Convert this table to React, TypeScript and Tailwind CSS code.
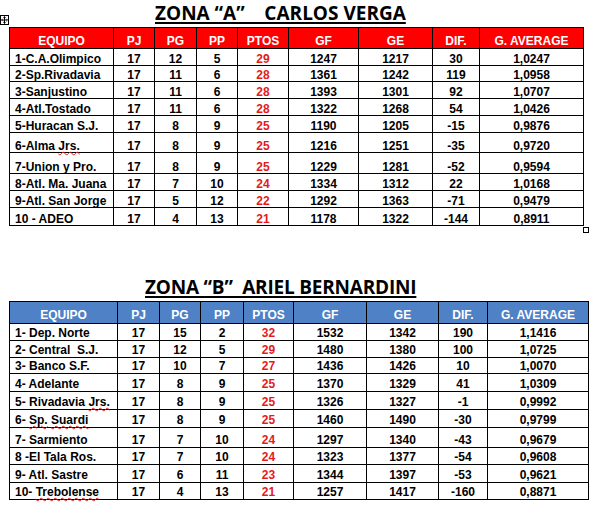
import React from "react";

type Row = { name: React.ReactNode; v: (string | number)[]; h: number };

const wavy = "underline decoration-wavy decoration-[#e02020] decoration-1 underline-offset-[1px]";

const rowsA: Row[] = [
  { name: "1-C.A.Olimpico", v: [17, 12, 5, 29, 1247, 1217, 30, "1,0247"], h: 17 },
  { name: "2-Sp.Rivadavia", v: [17, 11, 6, 28, 1361, 1242, 119, "1,0958"], h: 16 },
  { name: "3-Sanjustino", v: [17, 11, 6, 28, 1393, 1301, 92, "1,0707"], h: 17 },
  { name: "4-Atl.Tostado", v: [17, 11, 6, 28, 1322, 1268, 54, "1,0426"], h: 17 },
  { name: "5-Huracan S.J.", v: [17, 8, 9, 25, 1190, 1205, -15, "0,9876"], h: 17 },
  { name: <>6-Alma <span className={wavy}>Jrs.</span></>, v: [17, 8, 9, 25, 1216, 1251, -35, "0,9720"], h: 20 },
  { name: "7-Union y Pro.", v: [17, 8, 9, 25, 1229, 1281, -52, "0,9594"], h: 21 },
  { name: "8-Atl. Ma. Juana", v: [17, 7, 10, 24, 1334, 1312, 22, "1,0168"], h: 17 },
  { name: "9-Atl. San Jorge", v: [17, 5, 12, 22, 1292, 1363, -71, "0,9479"], h: 17 },
  { name: "10 - ADEO", v: [17, 4, 13, 21, 1178, 1322, -144, "0,8911"], h: 18 },
];

const rowsB: Row[] = [
  { name: "1- Dep. Norte", v: [17, 15, 2, 32, 1532, 1342, 190, "1,1416"], h: 17 },
  { name: "2- Central  S.J.", v: [17, 12, 5, 29, 1480, 1380, 100, "1,0725"], h: 17 },
  { name: "3- Banco S.F.", v: [17, 10, 7, 27, 1436, 1426, 10, "1,0070"], h: 16 },
  { name: "4- Adelante", v: [17, 8, 9, 25, 1370, 1329, 41, "1,0309"], h: 18 },
  { name: <>5- Rivadavia <span className={wavy}>Jrs.</span></>, v: [17, 8, 9, 25, 1326, 1327, -1, "0,9992"], h: 18 },
  { name: <>6- <span className={wavy}>Sp.</span> <span className={wavy}>Suardi</span></>, v: [17, 8, 9, 25, 1460, 1490, -30, "0,9799"], h: 18 },
  { name: "7- Sarmiento", v: [17, 7, 10, 24, 1297, 1340, -43, "0,9679"], h: 20 },
  { name: "8 -El Tala Ros.", v: [17, 7, 10, 24, 1323, 1377, -54, "0,9608"], h: 17 },
  { name: "9- Atl. Sastre", v: [17, 6, 11, 23, 1344, 1397, -53, "0,9621"], h: 18 },
  { name: <>10- <span className={wavy}>Trebolense</span></>, v: [17, 4, 13, 21, 1257, 1417, -160, "0,8871"], h: 17 },
];

const headers = ["EQUIPO", "PJ", "PG", "PP", "PTOS", "GF", "GE", "DIF.", "G. AVERAGE"];

function Table({
  rows,
  widths,
  headBg,
  headH,
  bodyPad,
  headPad,
}: {
  rows: Row[];
  widths: number[];
  headBg: string;
  headH: number;
  bodyPad: string;
  headPad: string;
}) {
  const total = widths.reduce((a, b) => a + b, 0);
  return (
    <table
      className="table-fixed border-collapse border border-black ml-[9px] font-['Liberation_Sans',Arial,sans-serif] font-bold text-[12px] leading-[12px]"
      style={{ width: total + 1 }}
    >
      <colgroup>
        {widths.map((w, i) => (
          <col key={i} style={{ width: w }} />
        ))}
      </colgroup>
      <thead>
        <tr style={{ height: headH }} className={headBg}>
          {headers.map((h) => (
            <th
              key={h}
              className={`border border-black text-white text-center align-bottom font-bold p-0 whitespace-nowrap ${headPad}`}
            >
              {h}
            </th>
          ))}
        </tr>
      </thead>
      <tbody>
        {rows.map((r, i) => (
          <tr key={i} style={{ height: r.h }}>
            <td className={`border border-black text-left align-bottom pl-[5px] pr-0 pt-0 whitespace-pre text-black ${bodyPad}`}>
              {r.name}
            </td>
            {r.v.map((v, j) => (
              <td
                key={j}
                className={`border border-black text-center align-bottom p-0 whitespace-nowrap ${bodyPad} ${
                  j === 3 ? "text-[#e31b1b]" : "text-black"
                }`}
              >
                {v}
              </td>
            ))}
          </tr>
        ))}
      </tbody>
    </table>
  );
}

export default function App() {
  return (
    <div className="relative w-[589px] h-[509px] bg-white overflow-hidden">
      {/* move handle */}
      <div className="absolute left-0 top-[15px] w-[9px] h-[10px] border border-black bg-white flex items-center justify-center">
        <svg width="7" height="8" viewBox="0 0 7 8" className="block">
          <path d="M3.5 0.5 V7.5 M0.5 4 H6.5" stroke="black" strokeWidth="1" fill="none" />
          <path d="M2.3 1.7 L3.5 0.5 L4.7 1.7 M2.3 6.3 L3.5 7.5 L4.7 6.3 M1.7 2.8 L0.5 4 L1.7 5.2 M5.3 2.8 L6.5 4 L5.3 5.2" stroke="black" strokeWidth="0.8" fill="none" />
        </svg>
      </div>
      {/* resize handle */}
      <div className="absolute left-[583px] top-[227px] w-[6px] h-[6px] border border-black bg-white" />

      <div className="h-[27px] pl-[155px] pt-[3px] font-['Open_Sans',sans-serif] font-bold text-[19px] leading-[21px] whitespace-pre text-black">
        <span className="underline decoration-2 underline-offset-[2px]">{"ZONA “A”    CARLOS VERGA"}</span>
      </div>
      <Table
        rows={rowsA}
        widths={[104, 41, 42, 41, 51, 70, 74, 47, 104]}
        headBg="bg-[#ff0000]"
        headH={21}
        bodyPad="pb-0"
        headPad="pb-[1px]"
      />
      <div className="h-[75px] flex items-end pl-[145px] pb-[3px] font-['Open_Sans',sans-serif] font-bold text-[19px] leading-[21px] whitespace-pre text-black">
        <span className="underline decoration-2 underline-offset-[2px] tracking-[-0.2px]">{"ZONA “B”  ARIEL BERNARDINI"}</span>
      </div>
      <Table
        rows={rowsB}
        widths={[108, 42, 41, 43, 50, 73, 72, 49, 101]}
        headBg="bg-[#4f81c7]"
        headH={22}
        bodyPad="pb-[1px]"
        headPad="pb-[2px]"
      />
    </div>
  );
}
